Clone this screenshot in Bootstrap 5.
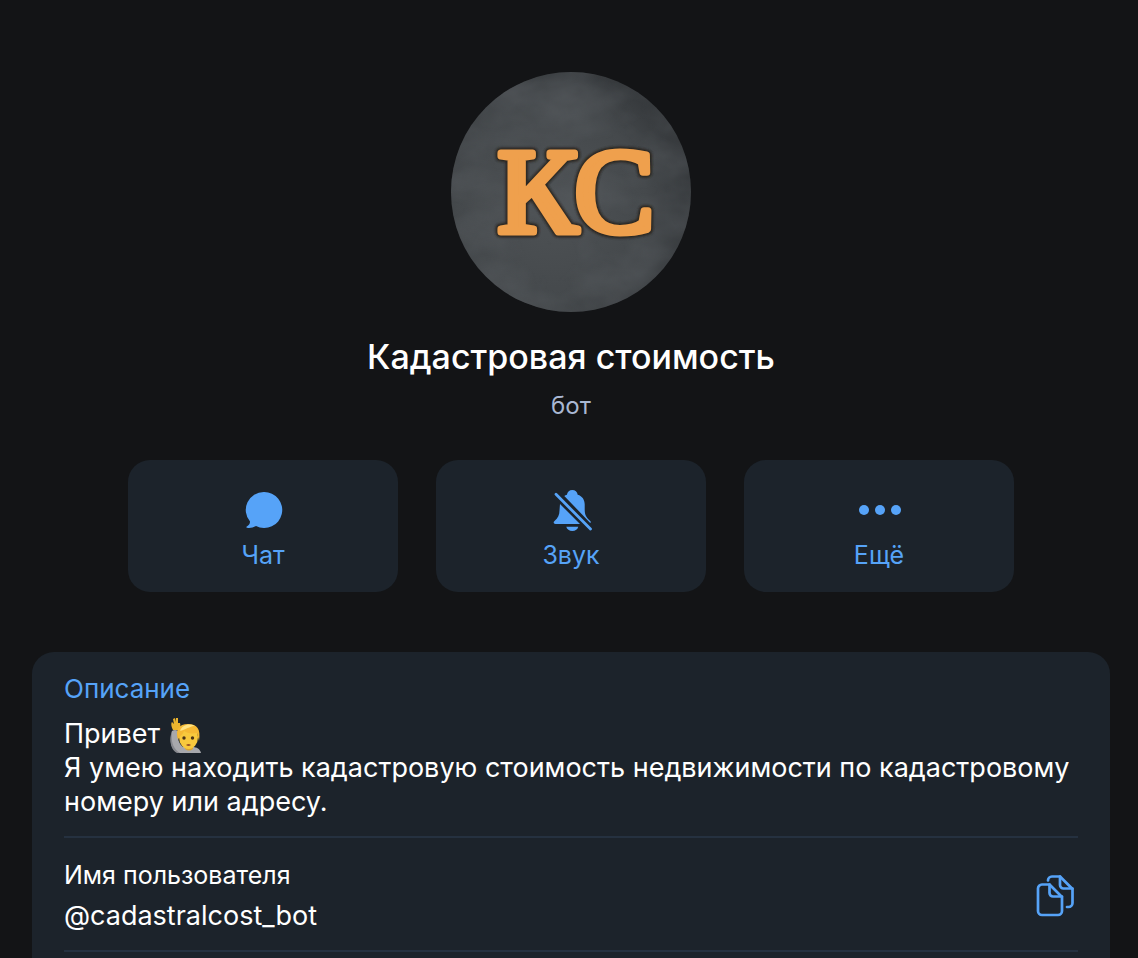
<!DOCTYPE html>
<html lang="ru" data-bs-theme="dark">
<head>
<meta charset="utf-8">
<meta name="viewport" content="width=device-width, initial-scale=1">
<title>Кадастровая стоимость</title>
<link href="https://cdn.jsdelivr.net/npm/bootstrap@5.3.0/dist/css/bootstrap.min.css" rel="stylesheet">
<style>
:root { --accent: #56a3f8; --panel: #1c232b; --line: #253140; }
body { background: #131416; color: #fff; font-family: Inter, "Liberation Sans", sans-serif; font-size: 27px; line-height: 34px; }
.profile { padding: 72px 28px 0 32px; }
.avatar { width: 240px; height: 240px; }
.avatar text { font-family: "Liberation Serif", serif; font-size: 120px; stroke-linejoin: round; }
.title-name { font-size: 34px; line-height: 44px; font-weight: 500; margin-top: 23px; }
.kind { color: #a9b8d3; font-size: 24px; line-height: 32px; margin-top: 11px; }
.actions { gap: 38px; padding: 0 96px; margin-top: 38px; }
.action { flex: 1 1 0; gap: 5px; background: var(--panel); color: var(--accent); border: 0; border-radius: 22px; font-size: 25px; line-height: 32px; padding: 26px 0 21px; }
.action:hover { background: #222c37; color: var(--accent); }
.action svg { width: 48px; height: 48px; }
.info { background: var(--panel); border-radius: 22px 22px 0 0; margin-top: 60px; padding: 0 32px; }
.caption { color: var(--accent); font-size: 26px; line-height: 34px; margin-bottom: 11px; }
.sub { font-size: 25px; line-height: 34px; margin-bottom: 7px; }
.entry { border-bottom: 2px solid var(--line); padding: 20px 0 17px; }
.emoji { width: 32px; height: 36px; margin: -6px 0 -6px 2px; }
.copy { color: var(--accent); }
</style>
</head>
<body>
<main class="profile min-vh-100 d-flex flex-column">
  <header class="text-center">
    <svg class="avatar d-block mx-auto" viewBox="0 0 240 240" role="img" aria-label="КС">
      <defs>
        <clipPath id="disc"><circle cx="120" cy="120" r="120"/></clipPath>
        <radialGradient id="slate" cx=".42" cy=".55" r=".66"><stop offset="0" stop-color="#4e5255"/><stop offset=".6" stop-color="#45494c"/><stop offset="1" stop-color="#2f3235"/></radialGradient>
        <filter id="grain" x="0" y="0" width="1" height="1"><feTurbulence type="fractalNoise" baseFrequency=".014 .02" numOctaves="4" seed="8"/><feColorMatrix values="0 0 0 0 .1  0 0 0 0 .11  0 0 0 0 .12  2 0 0 0 -.7"/></filter>
        <filter id="soft" x="-.1" y="-.1" width="1.2" height="1.2"><feGaussianBlur stdDeviation="1"/></filter>
      </defs>
      <g clip-path="url(#disc)">
        <rect width="240" height="240" fill="url(#slate)"/>
        <rect width="240" height="240" filter="url(#grain)" opacity=".6"/>
      </g>
      <g text-anchor="middle">
        <text x="125" y="160" fill="#2c2620" stroke="#2c2620" stroke-width="11" filter="url(#soft)" aria-hidden="true">КС</text>
        <text x="125" y="160" fill="#efa04d" stroke="#efa04d" stroke-width="7">КС</text>
      </g>
    </svg>
    <h1 class="title-name mb-0">Кадастровая стоимость</h1>
    <p class="kind mb-0">бот</p>
  </header>

  <div class="actions d-flex">
    <button type="button" class="action btn d-flex flex-column align-items-center">
      <svg viewBox="0 0 48 48" fill="currentColor" aria-hidden="true"><path d="M25 6a18 18 0 1 1-8 34c-3 1.700-6 2.300-9 1.800-.8-.1-.9-.8-.2-1.200 2-1.200 3.300-3 3.200-5A18 18 0 0 1 25 6z"/></svg>
      <span>Чат</span>
    </button>
    <button type="button" class="action btn d-flex flex-column align-items-center">
      <svg viewBox="0 0 48 48" fill="currentColor" aria-hidden="true"><path d="M17.300 10c.7-.6 1.600-1 2.600-1.200C20.400 6 22.500 4 25.300 4s5 2 5.400 4.800c4.600 1.300 7 5 7 9.700v5c0 5 1.400 8 5.300 11.200 1.100 1 1 1.800.2 2.200z"/><path d="M13 18l20 20H8.500c-1.900 0-2.500-1.600-1-3 3.500-3 5-6 5-10.500z"/><path d="M19.300 40.700h12c-.5 2.600-3 4.300-6 4.300s-5.500-1.700-6-4.300z"/><path d="M9 8.300 43.500 43" fill="none" stroke="currentColor" stroke-width="2.800" stroke-linecap="round"/></svg>
      <span>Звук</span>
    </button>
    <button type="button" class="action btn d-flex flex-column align-items-center">
      <svg viewBox="0 0 48 48" fill="currentColor" aria-hidden="true"><circle cx="9" cy="24" r="5"/><circle cx="25" cy="24" r="5"/><circle cx="41" cy="24" r="5"/></svg>
      <span>Ещё</span>
    </button>
  </div>

  <section class="info flex-grow-1">
    <div class="entry">
      <h2 class="caption fw-normal">Описание</h2>
      <p class="mb-0">Привет
        <svg class="emoji align-middle" viewBox="0 0 32 36" role="img" aria-label="Человек поднимает руку">
          <path d="M2 13q3-2 6 0c-1 8 1 13 5 16h9c5 0 8 2 9 6H9C1 33-1 23 2 13z" fill="#a7a8ac"/>
          <path d="M2 13c-1 9 0 17 8 22H7C0 31-1 21 2 13z" fill="#85878d"/>
          <path d="M3 12C1 8 1 5 2 4l2 2-1-5 2-1 1 4V0h2v5l2 0c1 3 0 5-2 7z" fill="#edb52e"/>
          <path d="M15 27h8v4q-4 3-8 0z" fill="#dca42f"/>
          <ellipse cx="18.500" cy="19" rx="9.500" ry="12" fill="#f8c93d"/>
          <path d="M8 22C5 11 9 6 18 6c9 0 13 5 11 17l-2-8c-6 1-10 0-13-2-1 4-4 4-6 9z" fill="#f5b934"/>
          <path d="M10 13c2-6 9-8 15-5-4 0-6 2-15 5z" fill="#ffe383"/>
          <circle cx="14" cy="20" r="1.700" fill="#4b3418"/><circle cx="22.500" cy="20" r="1.700" fill="#4b3418"/>
          <path d="M16 27q2.500-2 5 0-2.500 2-5 0z" fill="#994f22"/>
        </svg><br>Я умею находить кадастровую стоимость недвижимости по кадастровому номеру или адресу.</p>
    </div>
    <div class="entry d-flex align-items-center justify-content-between">
      <div>
        <h2 class="sub fw-normal">Имя пользователя</h2>
        <a href="#" class="text-white text-decoration-none">@cadastralcost_bot</a>
      </div>
      <button type="button" class="copy btn p-0 border-0 d-flex" aria-label="Скопировать имя пользователя">
        <svg width="44" height="44" viewBox="0 0 44 44" fill="none" stroke="currentColor" stroke-width="2.700" stroke-linecap="round" stroke-linejoin="round" aria-hidden="true"><path d="M8 10.500h7.500L28 23V37a4 4 0 0 1-4 4H8a4 4 0 0 1-4-4V14.500a4 4 0 0 1 4-4z"/><path d="M15.500 10.500V19a3.500 3.500 0 0 0 3.500 3.500h9"/><path d="M14 6.500a4 4 0 0 1 4-4h8L38.500 15v14a4 4 0 0 1-4 4H33"/><path d="M26 2.500V11a3.500 3.500 0 0 0 3.500 3.500h9"/></svg>
      </button>
    </div>
  </section>
</main>
<script src="https://cdn.jsdelivr.net/npm/bootstrap@5.3.0/dist/js/bootstrap.bundle.min.js"></script>
</body>
</html>
